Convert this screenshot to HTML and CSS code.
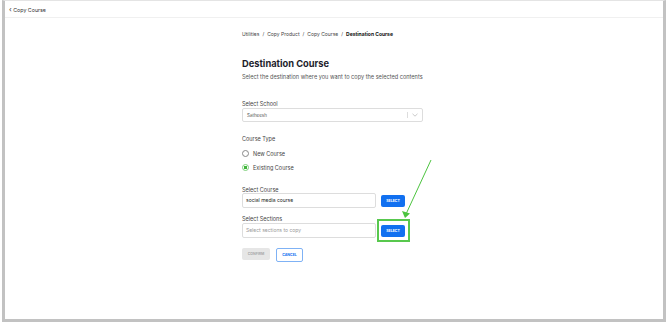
FILE: index.html
```html
<!DOCTYPE html>
<html lang="en">
<head>
    <meta charset="UTF-8">
    <meta name="viewport" content="width=device-width, initial-scale=1.0">
    <title>Copy Course</title>
    <link rel="stylesheet" href="styles.css">
</head>
<body>

<div class="frame">
    <div class="topbar">
        <span class="back">&#8249;</span> Copy Course
    </div>

    <div class="content">
        <div class="breadcrumb">
            <span>Utilities</span><span class="sep">/</span>
            <span>Copy Product</span><span class="sep">/</span>
            <span>Copy Course</span><span class="sep">/</span>
            <b>Destination Course</b>
        </div>

        <h2>Destination Course</h2>
        <p class="subtitle">Select the destination where you want to copy the selected contents</p>

        <label class="field-label">Select School</label>
        <div class="select">
            <span>Satheesh</span>
            <span class="select-divider"></span>
            <svg class="chevron" width="6" height="4" viewBox="0 0 6 4"><path d="M0.5 0.8 L3 3.2 L5.5 0.8" fill="none" stroke="#b5b5b5" stroke-width="0.7"/></svg>
        </div>

        <div class="field-label type-label">Course Type</div>
        <div class="radio-row"><span class="radio"></span>New Course</div>
        <div class="radio-row second"><span class="radio checked"></span>Existing Course</div>

        <label class="field-label course-label">Select Course</label>
        <div class="input-row">
            <div class="text-input">social media course</div>
            <button class="btn-select">SELECT</button>
        </div>

        <label class="field-label sections-label">Select Sections</label>
        <div class="input-row sections-row">
            <div class="text-input placeholder">Select sections to copy</div>
            <div class="marked">
                <button class="btn-select">SELECT</button>
                <div class="highlight"></div>
                <svg class="arrow" width="40" height="70" viewBox="0 0 40 70">
                    <line x1="35" y1="6" x2="10.5" y2="59" stroke="#4cc43f" stroke-width="1"/>
                    <path d="M6 57 L9 64 L14 59.5 Z" fill="#4cc43f"/>
                </svg>
            </div>
        </div>

        <div class="actions">
            <button class="btn-confirm">CONFIRM</button>
            <button class="btn-cancel">CANCEL</button>
        </div>
    </div>
</div>

</body>
</html>
```

FILE: styles.css
```css
body {
    margin: 0;
    font-family: Inter, "Noto Sans", sans-serif;
    background-color: #fff;
    color: #222;
}

.frame {
    margin-left: 2px;
    width: 658px;
    height: 318px;
    border: 3px solid #c2c2c2;
    border-top: 1px solid #e4e4e4;
}

.topbar {
    height: 16px;
    border-bottom: 1px solid #f0f0f0;
    font-size: 5.3px;
    line-height: 18px;
    padding-left: 4px;
    color: #333;
}

.back {
    font-size: 7px;
}

.content {
    width: 181px;
    margin-left: 237px;
    padding-top: 13px;
    display: flex;
    flex-direction: column;
}

.breadcrumb {
    font-size: 5px;
    color: #444;
    display: flex;
    gap: 3px;
}

.breadcrumb b {
    color: #111;
}

h2 {
    font-size: 9.3px;
    font-weight: 700;
    margin: 21px 0 0;
    color: #1d1d2b;
}

.subtitle {
    font-size: 5.6px;
    color: #555;
    margin: 5px 0 0;
    white-space: nowrap;
}

.field-label {
    font-size: 5.5px;
    color: #444;
    margin-top: 21px;
}

.select {
    margin-top: 1px;
    height: 12px;
    border: 1px solid #ddd;
    border-radius: 2px;
    display: flex;
    align-items: center;
    padding-left: 4px;
    font-size: 4.5px;
    color: #555;
}

.select span:first-child {
    flex: 1;
}

.select-divider {
    width: 1px;
    height: 6px;
    background-color: #ddd;
}

.chevron {
    margin: 0 4px;
}

.type-label {
    margin-top: 14px;
}

.radio-row {
    display: flex;
    align-items: center;
    gap: 4px;
    font-size: 5.5px;
    color: #444;
    margin-top: 8px;
    height: 7px;
}

.radio-row.second {
    margin-top: 7px;
}

.radio {
    width: 5px;
    height: 5px;
    border: 1px solid #888;
    border-radius: 50%;
    box-sizing: content-box;
}

.radio.checked {
    border-color: #7ed07a;
    background: radial-gradient(circle, #3fb53a 0 1.5px, #fff 1.8px);
}

.course-label {
    margin-top: 16px;
}

.sections-label {
    margin-top: 8px;
}

.input-row {
    display: flex;
    align-items: center;
    gap: 5px;
}

.input-row.sections-row {
    margin-top: 1px;
}

.text-input {
    width: 129px;
    height: 13px;
    border: 1px solid #ddd;
    border-radius: 2px;
    font-size: 5px;
    line-height: 13px;
    padding-left: 3px;
    color: #222;
}

.text-input.placeholder {
    color: #999;
}

.btn-select {
    display: block;
    width: 24px;
    height: 12px;
    padding: 0;
    border: none;
    border-radius: 2px;
    background-color: #1170f0;
    color: #fff;
    font-family: inherit;
    font-size: 3.5px;
    font-weight: 700;
}

.marked {
    position: relative;
}

.highlight {
    position: absolute;
    left: -4px;
    top: -6px;
    right: -5px;
    bottom: -5px;
    border: 2px solid #58c84e;
}

.arrow {
    position: absolute;
    left: 15px;
    top: -71px;
}

.actions {
    display: flex;
    gap: 6px;
    margin-top: 10px;
}

.btn-confirm {
    width: 28px;
    height: 12px;
    padding: 0;
    border: none;
    border-radius: 2px;
    background-color: #e6e6e6;
    color: #aaa;
    font-family: inherit;
    font-size: 3.5px;
    font-weight: 700;
}

.btn-cancel {
    width: 27px;
    height: 14px;
    padding: 0;
    border: 1px solid #7fb2f5;
    border-radius: 2px;
    background-color: #fff;
    color: #1170f0;
    font-family: inherit;
    font-size: 3.5px;
    font-weight: 700;
}
```
